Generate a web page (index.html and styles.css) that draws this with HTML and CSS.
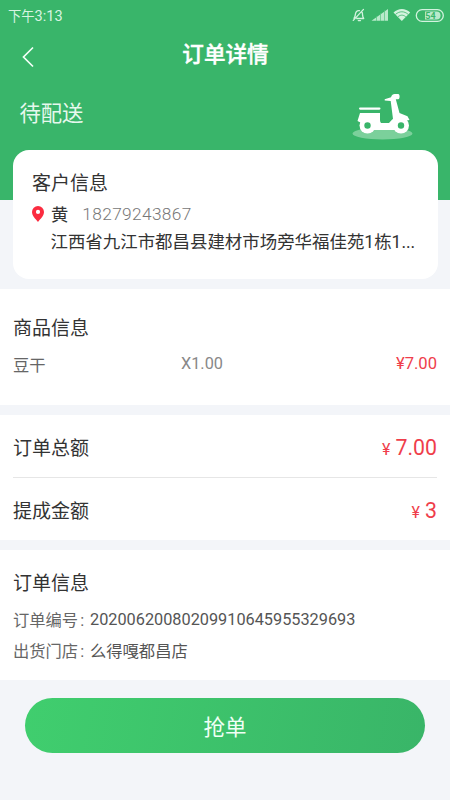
FILE: index.html
```html
<!DOCTYPE html>
<html lang="zh-CN">
<head>
<meta charset="utf-8">
<title>订单详情</title>
<link rel="stylesheet" href="styles.css">
</head>
<body>
<header class="hero">
  <div class="status">
    <span>下午<b>3:13</b></span>
    <svg class="status-icons" width="94" height="16" viewBox="0 0 94 16" fill="none">
      <g stroke="#d3f3df" stroke-width="1.3" stroke-linecap="round" stroke-linejoin="round">
        <path d="M4 11.200c1.200-1.100 1.100-2.400 1.400-4C5.800 4.800 7.300 3.300 9.400 3.600M12.200 5.500c.7 2.200-.1 4.100 1.500 6H6.800M8.300 13.600h2.200M13.500 2.400 3.300 13.400"/>
      </g>
      <path fill="#b9eacb" d="M21.500 13.700 38 2v11.700z"/>
      <path stroke="#55c480" stroke-width=".7" d="M26.500 9v5M30.500 6v8M34.500 3v11"/>
      <path fill="#d3f3df" d="M43.500 5.500c4.800-4.700 12-4.700 16.700 0L51.800 14z"/>
      <path stroke="#39b56a" stroke-width=".8" d="M45.500 7.400c4-3.500 8.800-3.500 12.700 0M47.900 9.800c2.600-2.200 5.300-2.200 7.900 0"/>
      <rect x="66.300" y="2.700" width="27" height="11.600" rx="5.800" stroke="#d3f3df" stroke-width="1.300"/>
      <path fill="#b9eacb" d="M75 4.500h11.500a4 4 0 0 1 0 8H75z"/>
      <text x="80.500" y="12" text-anchor="middle" class="battery">54</text>
    </svg>
  </div>
  <div class="nav">
    <svg class="back" width="14" height="22" viewBox="0 0 14 22" fill="none" stroke="#f4fff8" stroke-width="1.700"><path d="M12 1.500 2.500 11l9.500 9.500"/></svg>
    <h1>订单详情</h1>
  </div>
  <div class="state">
    <span>待配送</span>
    <svg class="scooter" width="62" height="50" viewBox="0 0 62 50">
      <ellipse cx="31.500" cy="42.500" rx="30" ry="6" fill="#7bd09b"/>
      <g fill="#fff">
        <rect x="8" y="16.500" width="21.500" height="2.200" rx="1.100"/>
        <path d="M9 22h20v7c0 2.500 1.200 3.500 3 3.500h4.500c2 0 3.300-3 5.500-4.500L39.700 10l-6-.6V8.200l6.300-1.900C40.700 4 42 3 43.700 3h3.500c1.900 0 1.900 5.300 0 5.300h-2.400l3.700 13.700 8 3.200L58.500 29l-4 .7-7 4-11.500 5H20l-11-7.500-2.500-1.200z"/>
        <circle cx="16.500" cy="34.500" r="8"/>
        <circle cx="50" cy="34.500" r="8"/>
        <path d="M20 32h26v7H20z"/>
      </g>
      <circle cx="16.500" cy="34.500" r="3.200" fill="#39b56a"/>
      <circle cx="50" cy="34.500" r="3.200" fill="#39b56a"/>
    </svg>
  </div>
</header>
<main>
  <section class="customer">
    <h2>客户信息</h2>
    <div class="contact">
      <svg width="12" height="16" viewBox="0 0 12 16"><path fill="#fb2c40" fill-rule="evenodd" d="M6 0a6 6 0 0 1 6 6c0 3.600-3.500 6.800-6 10C3.500 12.800 0 9.600 0 6a6 6 0 0 1 6-6zm0 3.800a2.100 2.100 0 1 0 0 4.200 2.100 2.100 0 0 0 0-4.200z"/></svg>
      <span class="name">黄</span><span class="phone">18279243867</span>
    </div>
    <p class="address">江西省九江市都昌县建材市场旁华福佳苑1栋1...</p>
  </section>
  <section class="panel goods">
    <h2>商品信息</h2>
    <div class="item"><span>豆干</span><span class="count">X1.00</span><span class="price">¥7.00</span></div>
  </section>
  <section class="panel totals">
    <div class="total"><h2>订单总额</h2><span class="amount"><small>¥</small>7.00</span></div>
    <div class="total"><h2>提成金额</h2><span class="amount"><small>¥</small>3</span></div>
  </section>
  <section class="panel order">
    <h2>订单信息</h2>
    <p class="line"><span class="key">订单编号<i>:</i></span><span class="number">20200620080209910645955329693</span></p>
    <p class="line"><span class="key">出货门店<i>:</i></span><span>么得嘎都昌店</span></p>
  </section>
  <button class="grab" type="button">抢单</button>
</main>
</body>
</html>
```
FILE: styles.css
```css
* { box-sizing: border-box; }
body {
  margin: 0;
  min-height: 800px;
  background: #f3f5f9;
  color: #333;
  font-family: Roboto, "Noto Sans CJK SC", sans-serif;
}
h1, h2, p { margin: 0; font-weight: 400; }
.hero {
  height: 200px;
  background: #39b56a;
  color: #fff;
}
.status {
  height: 31px;
  padding: 0 6px 0 8px;
  display: flex;
  align-items: center;
  justify-content: space-between;
  color: #d8f4e2;
  font-size: 13.300px;
  line-height: 28px;
}
.status span { margin-top: 2px; }
.status b { font-size: 14.500px; font-weight: 400; }
.status-icons { margin-top: -1px; }
.battery { font-size: 9px; font-weight: 700; fill: #39b56a; }
.nav {
  height: 47px;
  display: grid;
  grid-template-columns: 60px 1fr 60px;
  align-items: center;
}
.back { margin: 4px 0 0 21px; }
.nav h1 {
  padding-left: 1px;
  font-size: 21.600px;
  line-height: 46px;
  font-weight: 500;
  text-align: center;
  -webkit-text-stroke: .4px #fff;
}
.state {
  height: 72px;
  padding: 0 37px 0 19.500px;
  display: flex;
  justify-content: space-between;
  align-items: flex-start;
  font-size: 21.300px;
  line-height: 71px;
  color: #e6f8ed;
}
.scooter { margin-top: 13px; }
.customer {
  height: 129px;
  margin: -50px 12px 10px 13px;
  padding: 20px 19px 0;
  border-radius: 16px;
  background: #fff;
}
h2 { font-size: 19px; line-height: 28px; }
.contact {
  height: 32px;
  display: flex;
  align-items: center;
}
.name { margin: -2px 14px 0 7px; font-size: 17.300px; }
.phone { font-size: 17.300px; letter-spacing: .36px; color: #777; font-weight: 300; line-height: 22px; }
.address {
  padding-left: 18.500px;
  font-size: 17.450px;
  line-height: 26px;
  margin-top: -1px;
  white-space: nowrap;
}
.panel {
  margin-bottom: 10px;
  padding: 0 13px;
  background: #fff;
}
.goods { height: 116px; padding-top: 26px; }
.item {
  height: 41px;
  display: grid;
  grid-template-columns: 168px 1fr auto;
  align-items: center;
  font-size: 16.300px;
  color: #666;
}
.count { color: #888; }
.price { color: #ef3e4b; font-size: 16.600px; }
.totals { height: 125px; }
.total {
  height: 63px;
  display: flex;
  align-items: center;
  justify-content: space-between;
  border-bottom: 1px solid #e6e6e6;
}
.total h2 { padding-top: 5px; }
.total:last-child { height: 62px; border: 0; }
.amount { padding-top: 2px; font-size: 21.300px; color: #ef3e4b; }
.amount small { margin-right: 5px; font-size: 16px; }
.order { height: 130px; padding-top: 20px; margin-bottom: 18px; }
.line {
  height: 31px;
  display: flex;
  align-items: center;
  font-size: 16.300px;
  color: #555;
}
.number { padding-top: 2px; }
.order h2 { margin-bottom: 5px; }
.key { width: 77px; color: #666; }
.key i { margin-left: 2px; font-style: normal; }
.grab {
  display: block;
  width: 400px;
  height: 55px;
  margin: 0 auto;
  padding: 0;
  border: 0;
  border-radius: 28px;
  background: linear-gradient(100deg, #40ce6e, #39b568);
  color: #f0fff5;
  font: inherit;
  font-size: 21.500px;
}
```
